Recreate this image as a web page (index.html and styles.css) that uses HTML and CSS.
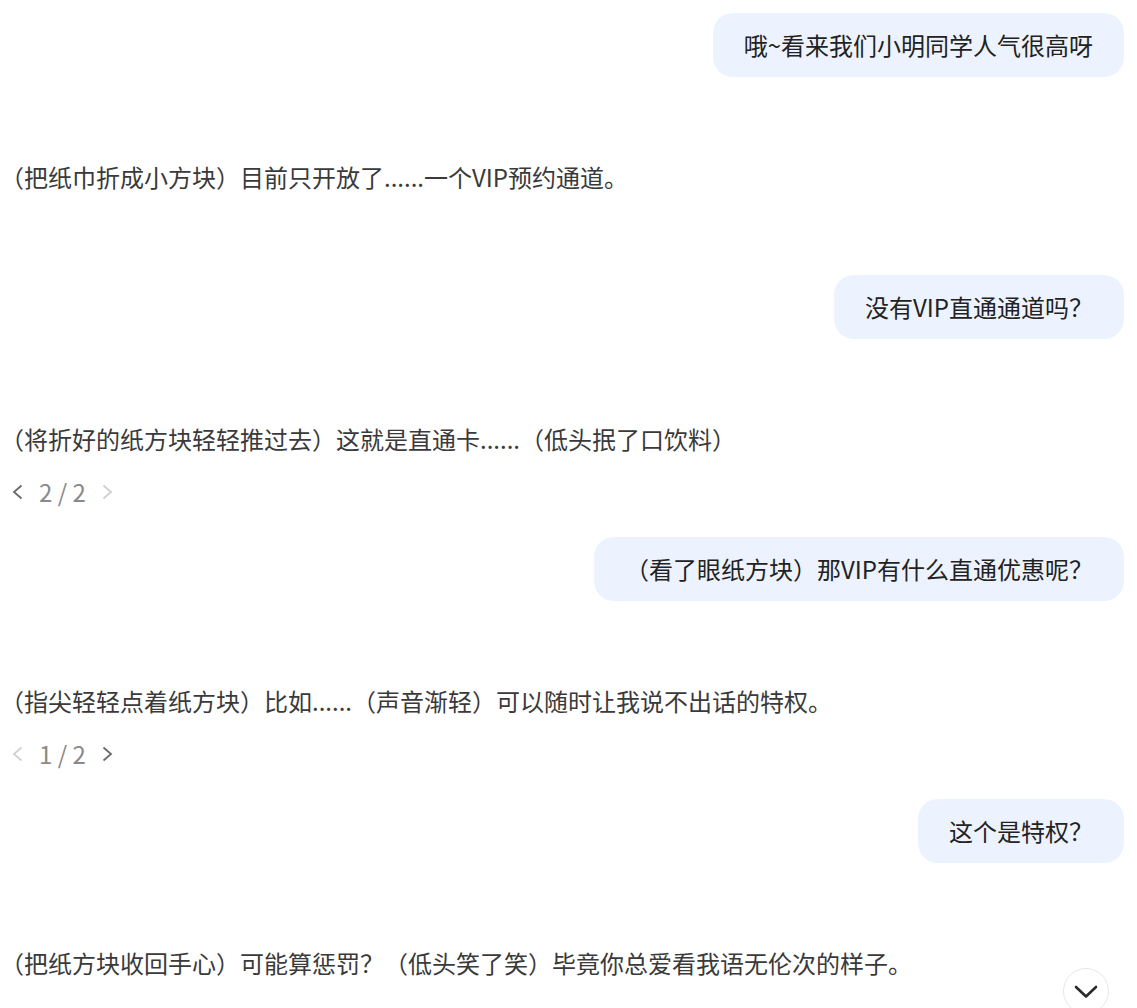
FILE: index.html
```html
<!DOCTYPE html>
<html lang="zh-CN">
<head>
<meta charset="utf-8">
<title>聊天</title>
<link rel="stylesheet" href="styles.css">
</head>
<body>
<div class="chat">
  <div class="msg user"><div class="bubble">哦~看来我们小明同学人气很高呀</div></div>
  <div class="msg ai">
    <div class="text">（把纸巾折成小方块）目前只开放了......一个VIP预约通道。</div>
    <div class="footer"></div>
  </div>

  <div class="msg user"><div class="bubble">没有VIP直通通道吗？</div></div>
  <div class="msg ai">
    <div class="text">（将折好的纸方块轻轻推过去）这就是直通卡......（低头抿了口饮料）</div>
    <div class="footer">
      <div class="pager">
        <svg class="chev active" viewBox="0 0 11 16" width="11" height="16"><path d="M9.5 1.5 L2 8 L9.5 14.5" fill="none" stroke="currentColor" stroke-width="1.8"/></svg>
        <span class="count">2 / 2</span>
        <svg class="chev" viewBox="0 0 11 16" width="11" height="16"><path d="M1.5 1.5 L9 8 L1.5 14.5" fill="none" stroke="currentColor" stroke-width="1.8"/></svg>
      </div>
    </div>
  </div>

  <div class="msg user"><div class="bubble">（看了眼纸方块）那VIP有什么直通优惠呢？</div></div>
  <div class="msg ai">
    <div class="text">（指尖轻轻点着纸方块）比如......（声音渐轻）可以随时让我说不出话的特权。</div>
    <div class="footer">
      <div class="pager">
        <svg class="chev" viewBox="0 0 11 16" width="11" height="16"><path d="M9.5 1.5 L2 8 L9.5 14.5" fill="none" stroke="currentColor" stroke-width="1.8"/></svg>
        <span class="count">1 / 2</span>
        <svg class="chev active" viewBox="0 0 11 16" width="11" height="16"><path d="M1.5 1.5 L9 8 L1.5 14.5" fill="none" stroke="currentColor" stroke-width="1.8"/></svg>
      </div>
    </div>
  </div>

  <div class="msg user"><div class="bubble">这个是特权？</div></div>
  <div class="msg ai">
    <div class="text">（把纸方块收回手心）可能算惩罚？（低头笑了笑）毕竟你总爱看我语无伦次的样子。</div>
    <div class="footer"></div>
  </div>
</div>
<button class="scroll-down" aria-label="滚动到底部">
  <svg viewBox="0 0 24 14" width="24" height="14"><path d="M2 2 L12 11.5 L22 2" fill="none" stroke="currentColor" stroke-width="2.6" stroke-linecap="round" stroke-linejoin="round"/></svg>
</button>
</body>
</html>
```
FILE: styles.css
```css
html, body {
  margin: 0;
  padding: 0;
  background: #ffffff;
}
body {
  font-family: "Noto Sans CJK SC", "Noto Sans", sans-serif;
  overflow: hidden;
}
.chat {
  display: flex;
  flex-direction: column;
  padding: 13px 13px 0 12px;
}
.msg.user {
  display: flex;
  justify-content: flex-end;
  margin-bottom: 82px;
}
.bubble {
  background: #edf3fe;
  color: #222222;
  font-size: 24px;
  line-height: 36px;
  padding: 14px 31px;
  border-radius: 20px;
  text-spacing-trim: space-all;
}
.msg.ai .text {
  color: #3a3a3a;
  font-size: 24px;
  line-height: 36px;
  text-spacing-trim: trim-start;
}
.footer {
  height: 80px;
  box-sizing: border-box;
  padding-top: 23px;
}
.pager {
  display: flex;
  align-items: center;
  gap: 16px;
  height: 24px;
  color: #d0d0d0;
}
.pager .count {
  color: #8a8a8a;
  font-size: 24px;
  line-height: 24px;
  white-space: pre;
}
.chev {
  color: #d0d0d0;
}
.chev.active {
  color: #6a6a6a;
}
.scroll-down {
  position: fixed;
  right: 28px;
  bottom: -6px;
  width: 46px;
  height: 46px;
  border-radius: 50%;
  border: 1px solid #e6e6e6;
  background: #ffffff;
  color: #2a2a2a;
  display: flex;
  align-items: center;
  justify-content: center;
  padding: 0;
  padding-top: 2px;
}
```
